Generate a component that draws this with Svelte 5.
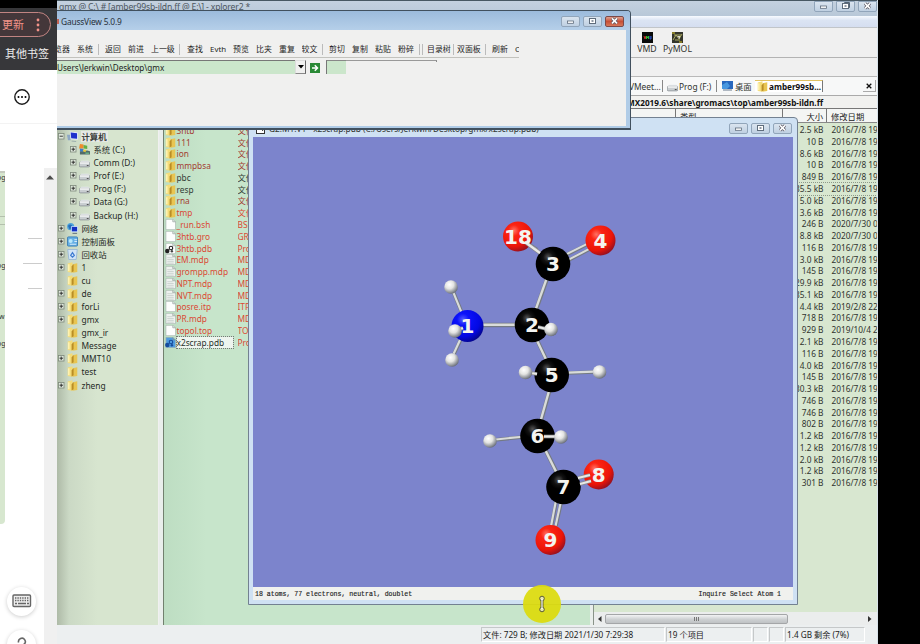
<script>
  const tools = [
    ['览器', 23], ['系统', 21], ['|', 7], ['返回', 23], ['前进', 23], ['上一级', 28], ['|', 8],
    ['查找', 23], ['Evth', 23], ['预览', 23], ['比夹', 23], ['重复', 22.5], ['较文', 20.5], ['|', 7],
    ['剪切', 23], ['复制', 23], ['粘贴', 23], ['粉碎', 21], ['|', 3], ['|', 5], ['目录树', 26],
    ['|', 4], ['双面板', 28], ['|', 7], ['刷新', 23], ['C', 4]
  ];
  const tree = [
    ['计算机', 'pc', 0, 1], ['系统 (C:)', 'win', 1, 1], ['Comm (D:)', 'drive', 1, 1], ['Prof (E:)', 'drive', 1, 1],
    ['Prog (F:)', 'drive', 1, 1], ['Data (G:)', 'drive', 1, 1], ['Backup (H:)', 'drive', 1, 1], ['网络', 'net', 0, 1],
    ['控制面板', 'panel', 0, 1], ['回收站', 'bin', 0, 1], ['1', 'folder', 0, 1], ['cu', 'folder', 0, 0],
    ['de', 'folder', 0, 1], ['forLi', 'folder', 0, 1], ['gmx', 'folder', 0, 1], ['gmx_ir', 'folder', 0, 0],
    ['Message', 'folder', 0, 0], ['MMT10', 'folder', 0, 1], ['test', 'folder', 0, 0], ['zheng', 'folder', 0, 1]
  ];
  const files = [
    ['3htb', 'folder', '文件', 'r'], ['111', 'folder', '文件', 'r'], ['ion', 'folder', '文件', 'r'],
    ['mmpbsa', 'folder', '文件', 'r'], ['pbc', 'folder', '文件', 'k'], ['resp', 'folder', '文件', 'k'],
    ['rna', 'folder', '文件', 'r'], ['tmp', 'folder', '文件', 'o'], ['_run.bsh', 'page', 'BSH', 'o'],
    ['3htb.gro', 'page', 'GRO', 'o'], ['3htb.pdb', 'mol', 'Pro', 'o'], ['EM.mdp', 'lines', 'MDP', 'o'],
    ['grompp.mdp', 'lines', 'MDP', 'o'], ['NPT.mdp', 'lines', 'MDP', 'o'], ['NVT.mdp', 'lines', 'MDP', 'o'],
    ['posre.itp', 'page', 'ITP', 'o'], ['PR.mdp', 'lines', 'MDP', 'o'], ['topol.top', 'page', 'TOP', 'o'],
    ['x2scrap.pdb', 'molblue', 'Pro', 'sel']
  ];
  const d = '2016/7/8 19';
  const rows = [
    ['2.5 kB', d], ['10 B', d], ['8.6 kB', d], ['10 B', d], ['849 B', d], ['35.5 kB', d], ['5.0 kB', d], ['3.6 kB', d],
    ['246 B', '2020/7/30 0'], ['8.8 kB', '2020/7/30 0'], ['116 B', d], ['3.0 kB', d], ['145 B', d], ['29.9 kB', d],
    ['35.1 kB', d], ['4.4 kB', '2019/2/8 22'], ['718 B', d], ['929 B', '2019/10/4 2'], ['2.1 kB', d], ['116 B', d],
    ['4.0 kB', d], ['145 B', d], ['30.3 kB', d], ['746 B', d], ['746 B', d], ['802 B', d], ['1.2 kB', d], ['1.2 kB', d],
    ['2.0 kB', d], ['1.2 kB', d], ['301 B', d]
  ];
  const bonds = [
    [537, 250, 525, 242, 4], [566, 255, 590, 243, 3.4], [569, 260, 592, 248, 3.4], [547, 279, 536, 310, 4],
    [482, 325, 517, 325, 4.4], [453, 291, 462, 313, 3.6], [461, 339, 454, 354, 3.6], [537, 340, 548, 363, 4],
    [568, 373, 594, 372, 3.6], [550, 389, 541, 421, 4], [494, 440, 523, 437, 3.6], [546, 451, 558, 475, 4],
    [556.5, 500, 551.5, 526, 3.6], [561.5, 501, 556, 526, 3.6]
  ];
  const atoms = [
    [518, 236.5, 15, 'o', '18'], [600.5, 240.5, 15, 'o', '4'], [553, 264, 17.3, 'c', '3'],
    [467.5, 326, 16, 'n', '1'], [532, 325, 17.3, 'c', '2'], [551.7, 375, 17.3, 'c', '5'],
    [537.5, 436, 17.3, 'c', '6'], [598.7, 474.5, 15, 'o', '8'], [563.5, 487, 17.3, 'c', '7'], [550.5, 540, 15, 'o', '9']
  ];
  const hydrogens = [[451, 287], [455, 331], [452, 360], [551, 329.5], [525.5, 372.5], [599.5, 372], [490, 441], [561, 437]];
  const overBonds = [[525, 242, 540, 253, 4], [538, 327, 549, 329.5, 3.6], [459, 329.5, 463, 328, 3.6], [528, 372.5, 537, 374, 3.6],
    [544, 436.5, 557, 436.5, 3.6], [578, 478, 590, 475, 3.4], [580, 484, 591, 481, 3.4]];
</script>

{#snippet icon(kind)}
  <svg class="ic" viewBox="0 0 12 12" width="11" height="11">
    {#if kind === 'folder'}
      <path d="M.8 1.500 6 .3v11.400L.8 10.800z" fill="#f4dc78" /><path d="M6 2.500l5.200-1.200v9.500L6 11.700z" fill="#e8c552" /><path d="M5 4.500 7.200 2.500v7.500L5 11.500z" fill="#b98d26" />
      <path d="M2 2.500v7.500" stroke="#fff8c4" stroke-width="1.300" />
    {:else if kind === 'pc'}
      <path d="M0 4h4v6H1z" fill="#8da7c5" /><path d="M3 .5l9 1v8L4 9z" fill="#e3eafa" /><path d="M4 1.500l7 1v6L4.600 8z" fill="#1e31cc" /><path d="M5 11l5 .5" stroke="#9aa" />
    {:else if kind === 'win'}
      <path d="M1 8l8-1 3 1v3.500H1z" fill="#526d68" /><path d="M1 0l4 .5V5L0 5z" fill="#f08a2c" /><path d="M5 1l4 1v3.500L5 5z" fill="#64ae42" /><path d="M1 5l4 .5v3L1 8z" fill="#3d7dc8" /><path d="M5 6l3 .5-1 2.500-3-1z" fill="#eac83e" /><path d="M7 10h4" stroke="#79da98" />
    {:else if kind === 'drive'}
      <path d="M1 6l1.500-2h8L12 6z" fill="#e8ebee" /><rect x=".3" y="5.800" width="11.400" height="5" rx="1.300" fill="#c9ced1" stroke="#777f83" stroke-width=".7" /><path d="M1 6.500h10" stroke="#fff" stroke-width="1.400" /><path d="M8.500 9.300h2" stroke="#444" />
    {:else if kind === 'net'}
      <circle cx="4" cy="4" r="3.9" fill="#4fa4d9" /><path d="M1 3q4-3 5 1l-3 3z" fill="#256cbb" /><rect x="4.500" y="3.500" width="7.300" height="6.500" fill="#c9e0ff" /><rect x="5.300" y="4.300" width="5.700" height="4.800" fill="#142fc1" /><path d="M6 11.300h5" stroke="#567" />
    {:else if kind === 'panel'}
      <rect x=".5" y="1" width="11" height="10" rx="1" fill="#65afe5" stroke="#387bb1" /><circle cx="4" cy="5.500" r="2.200" fill="#b8e7fb" /><path d="M8 4h3M8 6h3M3 9h7" stroke="#fff" stroke-width=".8" />
    {:else if kind === 'bin'}
      <path d="M.8.5h10.400L10 11.500H2z" fill="#d2e4f6" stroke="#98b8d6" /><path d="M4 7l2-3 2 3-2 2z" fill="none" stroke="#3e7bd1" stroke-width="1.300" />
    {:else}
      <path d="M1 .4h7.500L11.500 3v8.600H1z" fill={kind === 'molblue' ? '#4e9ce0' : kind === 'lines' ? '#eef2ef' : '#fdfefd'} stroke="#a5b2ac" stroke-width=".7" /><path d="M8.500 .5V3h3" fill="none" stroke="#87958f" stroke-width=".7" />
      {#if kind === 'lines'}<path d="M2.500 4h6M2.500 6h7M2.500 8h7M2.500 10h7" stroke="#bbc5c2" stroke-width=".7" />{/if}
      {#if kind === 'mol' || kind === 'molblue'}<circle cx="2.500" cy="8.800" r="2.400" fill={kind === 'mol' ? '#222' : '#164c9c'} /><circle cx="6.500" cy="5.500" r="1.900" fill="none" stroke={kind === 'mol' ? '#222' : '#164c9c'} stroke-width="1.200" /><circle cx="7.500" cy="9" r="1.300" fill={kind === 'mol' ? '#444' : '#164c9c'} />{/if}
    {/if}
  </svg>
{/snippet}

{#snippet caption(close)}
  <div class="caps">
    <span><svg width="19" height="10"><rect x="6.500" y="5" width="6" height="2.300" fill="#fff" stroke="#5e6c7c" stroke-width=".8" /></svg></span>
    <span><svg width="19" height="10">{#if close === 'restore'}<path d="M8.500 1.500h5v5h-5z" fill="none" stroke="#536373" />{/if}<rect x="6.500" y="2.500" width="6" height="5" fill="#fff" stroke="#5e6c7c" /><rect x="8.500" y="4.300" width="2" height="1.400" fill="#5e6c7c" /></svg></span>
    <span class:red={close === 'red'}><svg width="19" height="10"><path d="M7 2.400l5 5m0-5l-5 5" stroke="#5e5b66" stroke-width="3" /><path d="M7 2.400l5 5m0-5l-5 5" stroke="#fff" stroke-width="1.500" /></svg></span>
  </div>
{/snippet}

<div class="screen">
  <aside>
    <div class="browser">
      <div class="update"><span>更新</span><svg width="4" height="14"><circle cx="2" cy="2" r="1.400" /><circle cx="2" cy="7" r="1.400" /><circle cx="2" cy="12" r="1.400" /></svg></div>
      <div class="marks">其他书签</div>
    </div>
    <div class="more"><svg width="18" height="18"><circle cx="9" cy="9" r="7.200" fill="none" stroke="#1c1c1c" stroke-width="1.400" /><circle cx="5.500" cy="9" r="1" /><circle cx="9" cy="9" r="1" /><circle cx="12.500" cy="9" r="1" /></svg></div>
    <div class="side">
      <div class="sliver"><span>og</span><i></i><i></i><span>og</span><span>w</span><span>og</span></div>
      <div class="notes"><i></i><i></i><i></i></div>
      <div class="scroll"><svg width="8" height="5"><path d="M0 4.500 4 .2l4 4.300z" fill="#4c4c4c" /></svg></div>
    </div>
    <div class="round kb"><svg width="20" height="14"><rect x="1" y="1" width="17.500" height="11.500" rx="1" fill="#eee" stroke="#666" stroke-width="1.400" /><path d="M3 4h14M3 6.500h14" stroke="#666" stroke-width="1.300" stroke-dasharray="1.4 1" /><path d="M3 9.500h2m1 0h8m1 0h2" stroke="#666" stroke-width="1.300" /></svg></div>
    <div class="round help"><svg width="12" height="14"><path d="M2.600 6.500a3.400 3.400 0 1 1 5.500 1.700Q6 9.500 6 12" fill="none" stroke="#666" stroke-width="1.600" /></svg></div>
  </aside>

  <main>
    <header class="maintitle"><span>gmx @ C:\ # [amber99sb-ildn.ff @ E:\] - xplorer2 *</span>{@render caption('restore')}</header>
    <div class="menu"></div>
    <div class="apps">
      <div class="app"><svg width="11" height="11"><rect width="11" height="11" fill="#090b0b" /><path d="M2 4l1 3 1-3" stroke="#c43127" fill="none" /><path d="M4.500 7V4l1 2 1-2v3" stroke="#2bba39" fill="none" /><path d="M8 4v3h1V4" stroke="#2a54cf" fill="none" /></svg><span>VMD</span></div>
      <div class="app"><svg width="11" height="11"><rect width="11" height="11" fill="#34362c" /><path d="M1 8l3-5 3 4 3-5M2 3h7M3 8h5" stroke="#aaaa63" fill="none" /><path d="M5 4h3v3z" fill="#d9d9c9" /><path d="M0 1h3M7 10h3" stroke="#d8c326" /></svg><span>PyMOL</span></div>
    </div>
    <div class="blank"></div>
    <div class="tabs">
      <span class="t1">VMeet...</span><span class="t2">{@render icon('drive')}Prog (F:)</span>
      <span class="t3"><svg width="11" height="10"><rect width="11" height="8" fill="#2767bd" /><path d="M0 4l5-3 3 4-3 3H0z" fill="#4797df" /><path d="M1 9h9" stroke="#68788b" /></svg>桌面</span>
      <span class="t4">{@render icon('folder')}<b>amber99sb...</b></span><span class="tx"><svg width="6" height="6"><path d="M.7.7l4.600 4.600m0-4.600L.7 5.300" stroke="#111" stroke-width="1.300" /></svg></span>
    </div>
    <div class="path">MX2019.6\share\gromacs\top\amber99sb-ildn.ff</div>
    <div class="panes">
      <div class="tree">
        {#each tree as t}
          <div class="node" class:sub={t[2]}>
            <span class="exp">{#if t[3]}<svg width="7" height="7"><rect x=".5" y=".5" width="5.500" height="5.500" fill="#dfe8dc" stroke="#7d887b" stroke-width=".8" /><path d={t[1] === 'pc' ? 'M1.6 3.2h3.3' : 'M1.5 3.2h3.5M3.2 1.5V5'} stroke="#222" stroke-width=".9" /></svg>{/if}</span>
            {@render icon(t[1])}<span class="nm" class:cur={t[1] === 'pc'}>{t[0]}</span>
          </div>
        {/each}
      </div>
      <div class="list">
        {#each files as f}
          <div class="file {f[3]}">{@render icon(f[1])}<span class="fn">{f[0]}</span><span class="ft">{f[2]}</span></div>
        {/each}
      </div>
      <div class="right">
        <div class="cols"><span class="ctype">类型</span><span class="csize">大小</span><span class="cdate">修改日期</span></div>
        <div class="rows">
          {#each rows as r, i}<div class="row" class:focus={i === 5}><span>{r[0]}</span><span>{r[1]}</span></div>{/each}
        </div>
        <div class="hbar"><svg width="4" height="6"><path d="M3.500 0v6L0 3z" fill="#333" /></svg><div class="thumb"><i></i><i></i><i></i></div><svg width="4" height="6"><path d="M0 0v6l3.500-3z" fill="#333" /></svg></div>
      </div>
    </div>
    <footer><span class="s1">文件: 729 B; 修改日期 2021/1/30 7:29:38</span><span class="s2">19 个项目</span><span class="s3"></span><span class="s4"></span><span class="s5">1.4 GB 剩余 (7%)</span></footer>

    <section class="mol">
      <header><svg width="9" height="9"><rect x=".5" y=".5" width="8" height="8" fill="#fff" stroke="#333" /><path d="M2 5l2-3 3 4" stroke="#333" fill="none" /></svg><span>G2:M1:V1 - x2scrap.pdb (C:/Users/Jerkwin/Desktop/gmx/x2scrap.pdb)</span>{@render caption('')}</header>
      <svg class="canvas" width="540" height="450" viewBox="253 137 540 450">
        <defs>
          <radialGradient id="gc" cx=".36" cy=".3" r=".65"><stop offset="0" stop-color="#555" /><stop offset=".22" stop-color="#111" /><stop offset=".4" stop-color="#000" /></radialGradient>
          <radialGradient id="go" cx=".36" cy=".3" r=".75"><stop offset="0" stop-color="#ff7264" /><stop offset=".25" stop-color="#fb2413" /><stop offset=".7" stop-color="#ec1508" /><stop offset="1" stop-color="#8d1022" /></radialGradient>
          <radialGradient id="gn" cx=".36" cy=".3" r=".75"><stop offset="0" stop-color="#555cff" /><stop offset=".25" stop-color="#0b12fb" /><stop offset=".7" stop-color="#0308e2" /><stop offset="1" stop-color="#040487" /></radialGradient>
          <radialGradient id="gh" cx=".38" cy=".32" r=".7"><stop offset="0" stop-color="#fff" /><stop offset=".45" stop-color="#e3e4e2" /><stop offset="1" stop-color="#686d78" /></radialGradient>
        </defs>
        <rect x="253" y="137" width="540" height="450" fill="#7c84cc" />
        {#each bonds as b}<path d="M{b[0]} {b[1]}L{b[2]} {b[3]}" stroke="#747a82" stroke-width={b[4]} /><path d="M{b[0] - .4} {b[1] - .3}L{b[2] - .4} {b[3] - .3}" stroke="#d9dcda" stroke-width={b[4] * .6} />{/each}
        {#each atoms as a}<circle cx={a[0]} cy={a[1]} r={a[2]} fill="url(#g{a[3]})" />{/each}
        {#each overBonds as b}<path d="M{b[0]} {b[1]}L{b[2]} {b[3]}" stroke="#8b8c8e" stroke-width={b[4]} /><path d="M{b[0]} {b[1]}L{b[2]} {b[3]}" stroke="#e8e9e7" stroke-width={b[4] * .6} />{/each}
        {#each hydrogens as h}<circle cx={h[0]} cy={h[1]} r="6.800" fill="url(#gh)" />{/each}
        {#each atoms as a}<text x={a[0]} y={a[1] + 7.2} text-anchor="middle">{a[4]}</text>{/each}
      </svg>
      <div class="ms"><span>18 atoms, 77 electrons, neutral, doublet</span><span class="inq">Inquire Select Atom 1</span></div>
    </section>

    <section class="gv">
      <header><i></i><span>GaussView 5.0.9</span>{@render caption('red')}</header>
      <div class="body">
        <div class="tools">{#each tools as t}<span class:sep={t[0] === '|'} style="width:{t[1]}px">{t[0] === '|' ? '' : t[0]}</span>{/each}</div>
        <div class="addr"><span class="url">Users\Jerkwin\Desktop\gmx</span><span class="dd"><svg width="6" height="4"><path d="M0 0h6L3 3.500z" /></svg></span><svg class="go" width="10" height="10"><rect width="10" height="10" fill="#298935" /><path d="M2 5h5M4.800 2.300l2.700 2.700-2.700 2.700" fill="none" stroke="#fff" stroke-width="1.500" /></svg><span class="bit"></span><span class="edge"></span></div>
      </div>
    </section>

    <div class="cursor"><svg width="38" height="38"><path d="M19 14v10" stroke="#59591f" stroke-width="3" /><circle cx="19" cy="13.500" r="2.300" fill="#e8e8b0" stroke="#444425" stroke-width=".9" /><circle cx="19" cy="24.500" r="2.300" fill="#e8e8b0" stroke="#444425" stroke-width=".9" /><path d="M19 14v10" stroke="#fff" stroke-width="1.200" /></svg></div>
  </main>
</div>

<style>
  :global(body) { margin: 0; background: #000; }
  .screen { width: 920px; height: 644px; display: flex; background: #000; overflow: hidden; font: 8.4px/11px "Noto Sans", "Noto Sans CJK SC", sans-serif; color: #30342f; }
  .screen :global(*) { box-sizing: border-box; }
  span, header, .path { white-space: nowrap; }
  svg { flex: none; display: block; }
  aside { position: relative; width: 57px; height: 644px; background: #fff; overflow: hidden; flex: none; display: flex; flex-direction: column; }
  .browser { height: 69.500px; border-top: 8px solid #000; background: #37373a; padding-top: 4px; flex: none; }
  .update { height: 25px; width: 65px; margin-left: -14px; border: 1.300px solid #c18482; border-radius: 13px; background: #44373a; color: #f39389; display: flex; align-items: center; padding-left: 15px; gap: 12px; font-size: 11px; }
  .update svg { fill: #f39389; }
  .marks { color: #eee; font-size: 11px; line-height: 17px; margin: 8px 0 0 5px; white-space: nowrap; }
  .more { height: 54px; padding: 18px 0 0 13px; border-bottom: 1px solid #f3f3f3; flex: none; }
  .side { display: flex; flex: 1; padding-top: 44.500px; }
  .sliver { width: 5px; height: 353px; background: #d7e7cf; border-top: 2px solid #c6cabf; border-radius: 0 0 4px; overflow: hidden; font-size: 7px; line-height: 9px; margin-top: 3px; display: flex; flex-direction: column; flex: none; }
  .sliver span { margin-left: -3px; }
  .sliver span:nth-child(1) { height: 43px; }
  .sliver i { height: 8px; border-top: 1px solid #b4c0ad; }
  .sliver span:nth-child(4) { margin-top: 29px; height: 51px; }
  .sliver span:nth-child(5) { height: 27px; margin-left: -1px; }
  .notes { width: 39px; padding-top: 70px; display: flex; flex-direction: column; gap: 24px; align-items: flex-end; padding-right: 2px; }
  .notes i { width: 14px; height: 1px; background: #ccc; }
  .notes i:nth-child(2) { width: 19px; }
  .scroll { width: 13px; background: #f0f0f0; padding: 7px 0 0 2px; }
  .round { position: absolute; left: 7px; width: 29px; height: 29px; border-radius: 50%; background: #fff; box-shadow: 0 1px 4px #0003; display: flex; justify-content: center; }
  .kb { top: 587px; padding-top: 7px; }
  .help { top: 630px; padding-top: 6px; }
  main { width: 821px; height: 644px; position: relative; display: flex; flex-direction: column; background: #f0f0f0; overflow: hidden; border-right: 1px solid #d8e2ea; }
  .maintitle { height: 16px; flex: none; background: linear-gradient(#c4d1df, #b8c8d8); border-top: 1.500px solid #485863; display: flex; justify-content: space-between; color: #4c565f; font-size: 8.600px; letter-spacing: -.16px; line-height: 12px; padding-left: 2px; }
  .caps { display: flex; gap: 3px; margin-left: auto; }
  .caps span { width: 19px; height: 11px; border: 1px solid #91a5ba; border-radius: 0 0 2px 2px; background: linear-gradient(#dae4ef, #bfd0e2); overflow: hidden; }
  .caps span svg { margin-left: -1px; margin-top: -1px; }
  .caps span.red { background: linear-gradient(#dfa18f, #c74f36 50%, #d6785a); border-color: #7c4948; }
  .menu { height: 12px; flex: none; background: linear-gradient(#f8fbff, #dbe4f3 40%, #d5def0); border-bottom: 1px solid #c1c5c9; }
  .apps { height: 29.500px; flex: none; display: flex; padding: 4px 0 0 577px; gap: 4px; border-bottom: 1px solid #b3b3b3; font-size: 8.700px; }
  .app { display: flex; flex-direction: column; align-items: center; gap: 0; width: 27px; }
  .app:first-child { width: 26px; }
  .app span { line-height: 13px; }
  .blank { height: 19px; flex: none; border-bottom: 1px solid #b9b9b9; }
  .tabs { height: 18.500px; flex: none; display: flex; align-items: center; padding: 3px 0 2px 572px; background: #f7f8f8; font-size: 8.400px; }
  .tabs > span { display: flex; align-items: center; height: 12px; }
  .t1 { width: 34px; border-right: 1px solid #888; }
  .t2 { width: 54px; padding-left: 4px; border-right: 1px solid #888; gap: 1px; }
  .t3 { width: 38px; padding-left: 5px; gap: 2px; }
  .tabs > .t4 { width: 68px; border-top: 1px solid #e1c262; border-right: 1px solid #777; background: #fff; padding-left: 2px; gap: 1px; color: #111; font-size: 8.200px; }
  .tx { width: 13px; justify-content: center; margin-left: 40px; border-right: 1px solid #aaa; border-bottom: 1px solid #aaa; }
  .path { height: 14px; flex: none; padding-left: 570px; border-top: 1px solid #aaa; border-bottom: 1px solid #777; color: #111; font-weight: 700; font-size: 8.200px; line-height: 13px; background: #f1f1ef; }
  .panes { height: 516px; flex: none; display: flex; overflow: hidden; }
  .tree { width: 101px; flex: none; padding-top: 21px; background: linear-gradient(90deg, #aebaa7, #cbd9c5 12%, #d7e5cf 40%); }
  .node { height: 13.080px; display: flex; align-items: center; gap: 2px; padding-left: 1px; }
  .sub { padding-left: 13px; }
  .exp { width: 7px; flex: none; }
  .ic { width: 11px; height: 11px; }
  .nm { padding-left: 1px; color: #252a25; }
  .node .nm { margin-left: .5px; }
  .cur { background: #e5e8e4; padding-right: 1px; -webkit-text-stroke: .2px #222; }
  .list { width: 427px; margin-left: 4.500px; border-left: 1px solid #71806e; padding-top: 15.500px; background: linear-gradient(90deg, #bdddc2, #c7e5cb 10%); outline: 4px solid #e9eeeb; outline-offset: 0; flex: none; }
  .file { height: 11.770px; display: flex; align-items: center; padding-left: 1px; gap: 1px; color: #db4934; }
  .file.r { color: #a33d32; }
  .file.k { color: #333c34; }
  .fn { width: 60px; flex: none; padding-left: 0; font-size: 8.300px; }
  .ft { width: 13px; overflow: hidden; }
  .sel .fn { background: #eef5ef; color: #26302a; outline: 1px dotted #777; width: 56px; margin-right: 4px; }
  .right { flex: 1; min-width: 0; display: flex; flex-direction: column; background: #d8e7d0; margin-left: 3.500px; border-left: 1px solid #899389; overflow: hidden; position: relative; }
  .cols { height: 13.500px; flex: none; background: #f4f5f4; border-bottom: 1px solid #888; display: flex; line-height: 15px; font-size: 8.300px; color: #222; }
  .cols span { border-right: 1px solid #777; flex: none; }
  .ctype { width: 108px; margin-left: 81px; border-left: 1px solid #777; padding-left: 4px; }
  .csize { width: 44px; text-align: right; padding-right: 3px; }
  .cols .cdate { padding-left: 4px; border: 0; }
  .rows { flex: 1; padding-top: 1.700px; }
  .row { height: 11.780px; display: flex; line-height: 12px; font-size: 8.300px; }
  .row span { flex: none; }
  .row span:first-child { width: 229.500px; text-align: right; }
  .row span:last-child { padding-left: 8px; }
  .focus { outline: 1px dotted #8d9989; }
  .hbar { height: 13px; flex: none; display: flex; align-items: center; background: #ebeded; padding: 0 5px 0 4px; gap: 3px; }
  .thumb { width: 183px; height: 10px; border: 1px solid #a4a6a8; border-radius: 2px; background: linear-gradient(#f2f3f4, #cdd0d2 55%, #bfc2c4); display: flex; justify-content: center; align-items: center; gap: 1px; margin-right: auto; }
  .thumb i { width: 1px; height: 4px; background: #777; }
  footer { flex: 1; display: flex; padding: 2px 0 0 424px; background: #eceff0; font-size: 8.200px; line-height: 13px; color: #222; }
  footer span { height: 15px; border: 1px solid #c5c8c9; border-right-color: #fff; border-bottom-color: #fff; padding-left: 1px; margin-right: 1px; }
  .s1 { width: 184px; } .s2 { width: 86px; } .s3 { width: 15px; } .s4 { width: 15px; } .s5 { width: 80px; }
  .mol { position: absolute; left: 191px; top: 117px; width: 550px; height: 488px; border: 1px solid #738191; border-radius: 4px 4px 0 0; background: #cfe1f3; padding: 0 4px; }
  .mol header { height: 19px; display: flex; align-items: flex-start; padding: 6px 1px 0 3px; gap: 4px; font-size: 8.300px; }
  .mol header > span { line-height: 10px; width: 275px; }
  .mol header .caps span { border-radius: 2px; }
  .mol .caps { margin-top: -1px; }
  .mol header > svg { margin-top: 1px; }
  .canvas text { font: 700 20px "DejaVu Sans", sans-serif; fill: #f4f4f0; }
  .ms { height: 13px; background: #f0f1ee; display: flex; justify-content: space-between; font: 6.550px/15px "Liberation Mono", monospace; color: #222; padding: 0 12px 0 2px; -webkit-text-stroke: .15px #222; }
  .gv { position: absolute; left: -1px; top: 10px; width: 575px; height: 120px; border: 1px solid #41505e; border-left: 0; border-bottom-width: 2px; border-radius: 0 4px 0 0; background: #b0cce7; padding: 0 4px 3px 1px; overflow: hidden; }
  .gv header { height: 19px; display: flex; align-items: center; background: linear-gradient(#9cbbdc, #b5cfe9); margin: 0 -4px 0 -1px; padding: 2px 6px 0 0; color: #27303a; font-size: 8.400px; letter-spacing: -.18px; }
  .gv header i { width: 2px; height: 5px; background: #c36456; margin: 0 2px 0 1px; }
  .gv .caps span { border-radius: 2px; }
  .gv .body { height: 96px; background: #f0f0ef; overflow: hidden; }
  .tools { height: 28px; padding-top: 10px; width: 465px; display: flex; border-bottom: 1px solid #c2c2bd; overflow: hidden; font-size: 7.900px; line-height: 18px; margin-left: -3px; color: #252525; }
  .tools span { flex: none; overflow: hidden; }
  .tools .sep { border-left: 1px solid #bbb; height: 11px; margin-top: 4px; }
  .addr { display: flex; height: 16px; padding-top: 2px; }
  .url { width: 238px; background: #cbe6cb; border-top: 1px solid #777; line-height: 14px; font-size: 8.150px; color: #222; }
  .dd { width: 11px; border: 1px solid #ddd; border-right: 1px solid #666; border-bottom-color: #888; display: flex; align-items: center; justify-content: center; }
  .go { margin: 3px 6px 0 4px; }
  .bit { width: 20px; border-left: 1px solid #777; border-top: 1px solid #888; background: #cbe6cb; }
  .edge { width: 91px; height: 2px; border-top: 1px solid #999; border-right: 1px solid #888; }
  .cursor { position: absolute; left: 466px; top: 585px; width: 38px; height: 38px; border-radius: 50%; background: #dddc10; opacity: .94; }
</style>
